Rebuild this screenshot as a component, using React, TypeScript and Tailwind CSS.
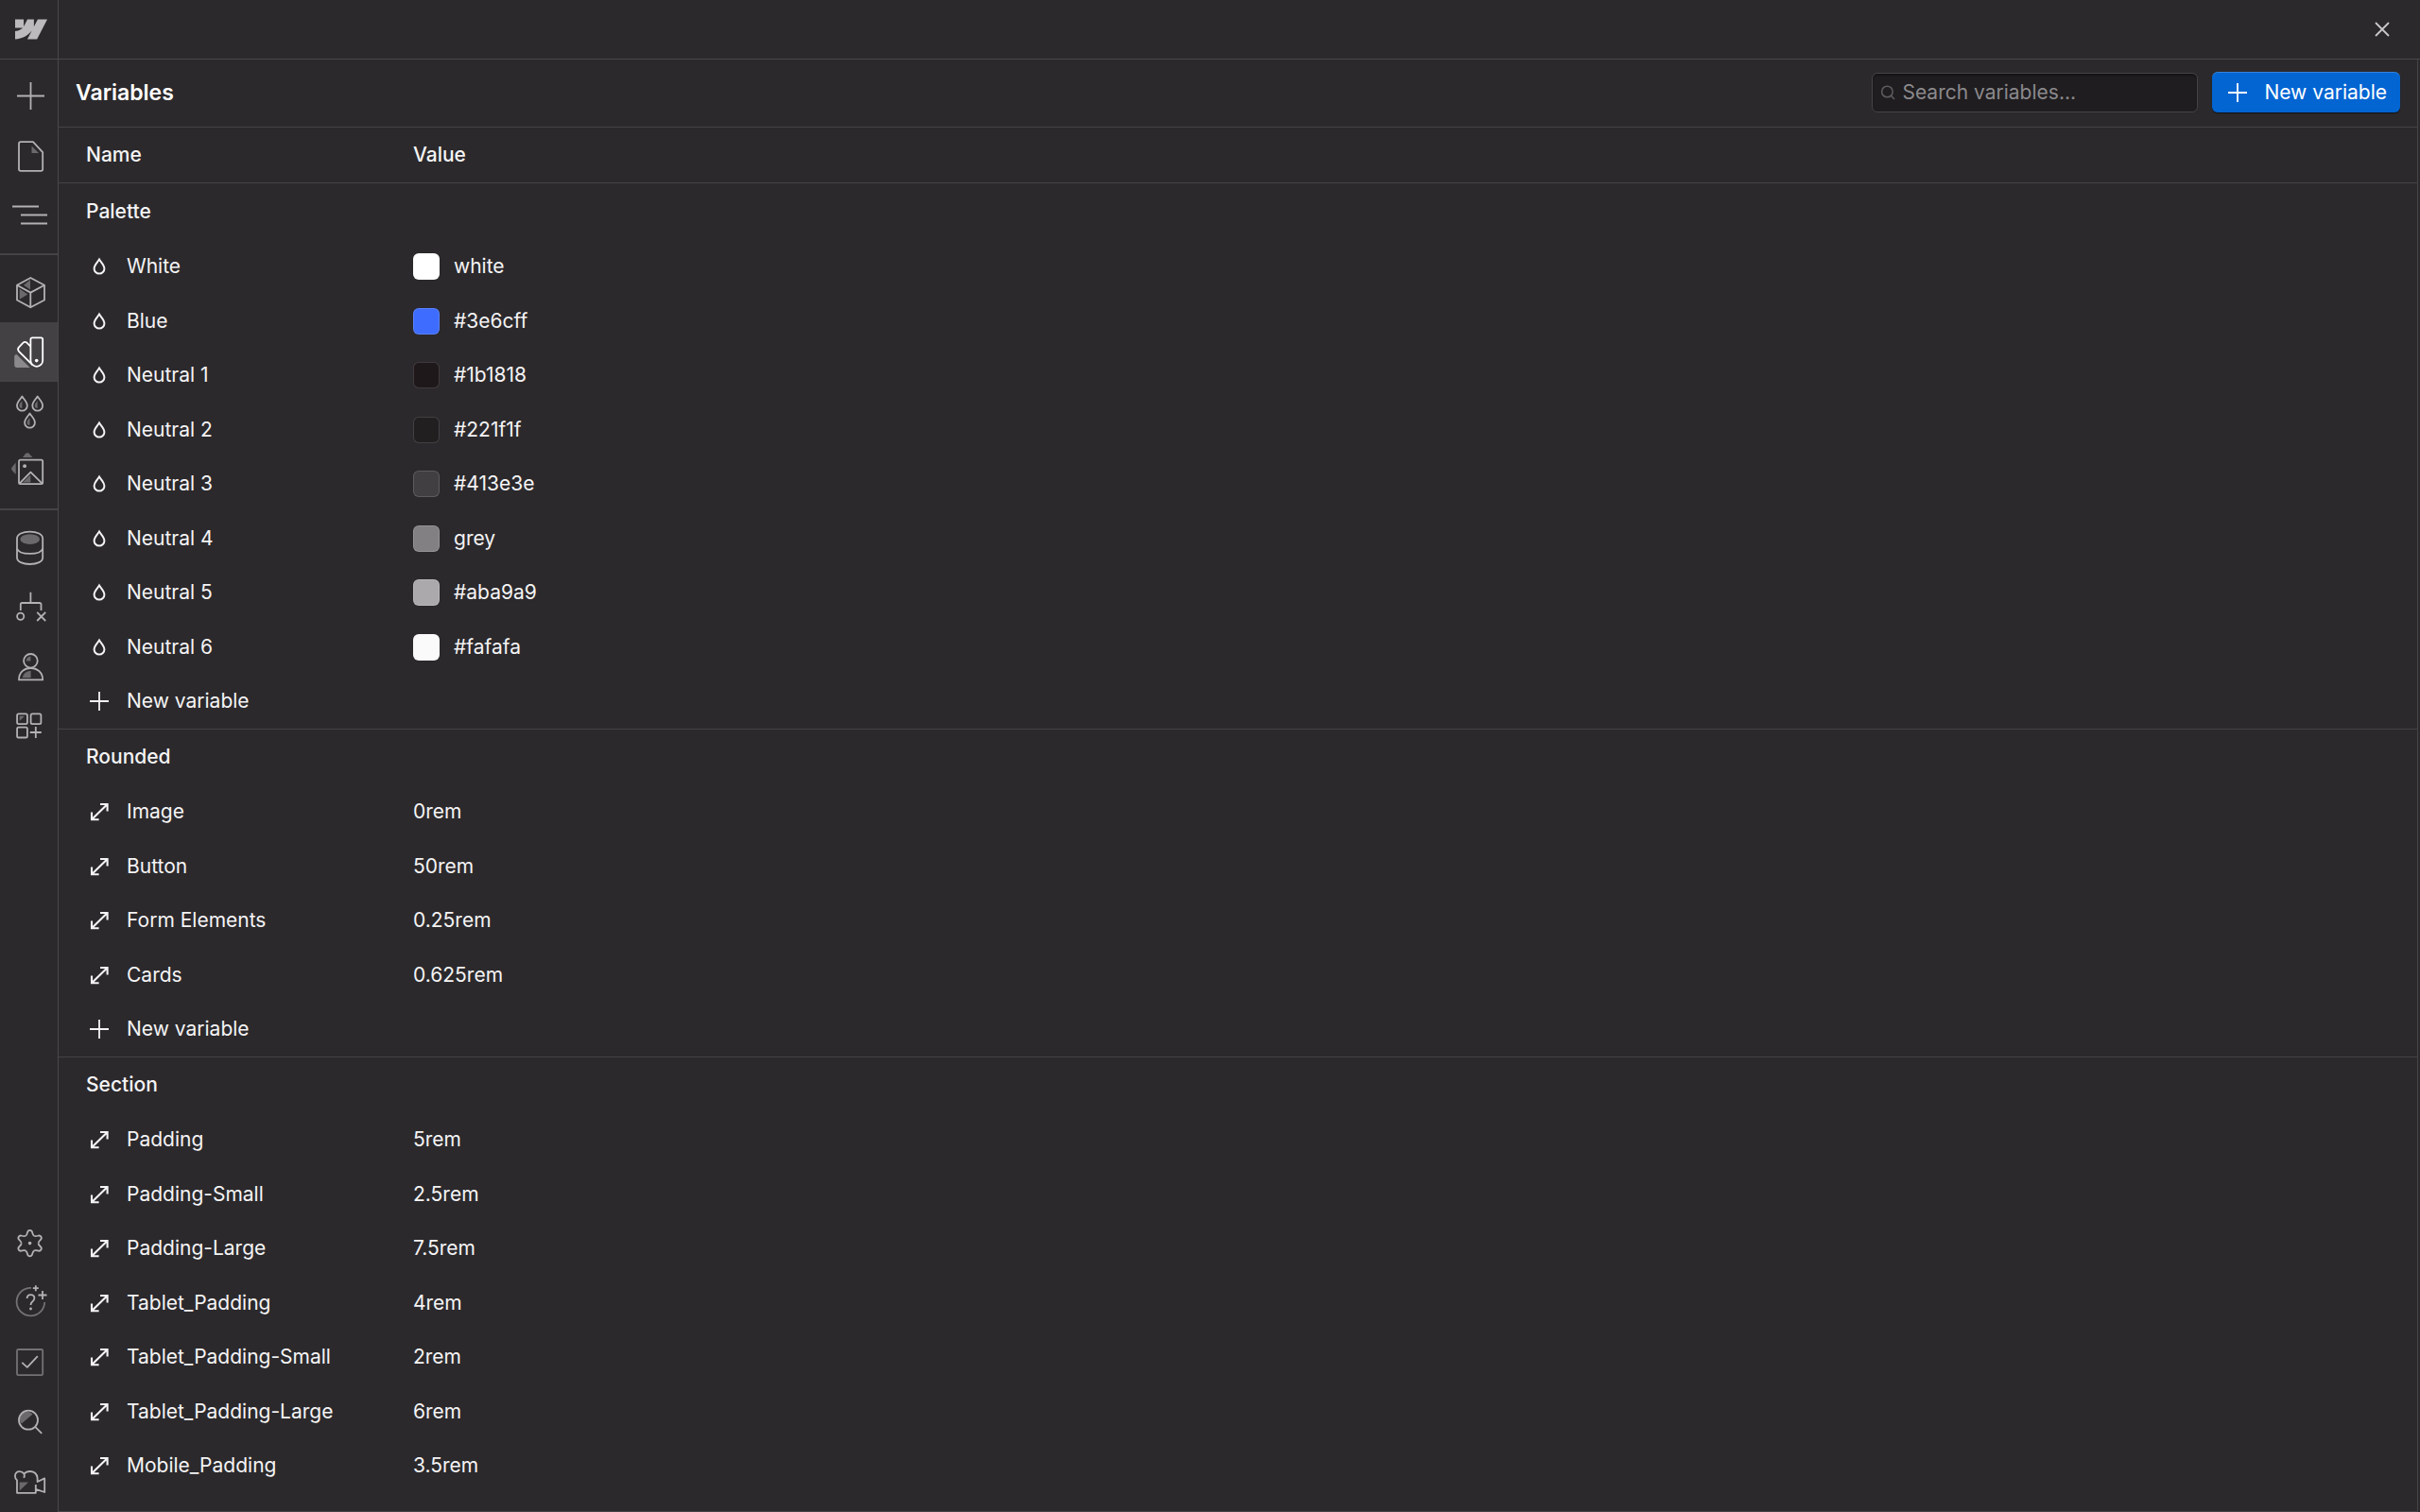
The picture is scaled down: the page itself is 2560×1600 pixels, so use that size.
import React, { useState } from 'react'
import type { ReactNode } from 'react'

type Kind = 'color' | 'size'

type Variable = {
  name: string
  value: string
  swatch?: string
}

type Group = {
  title: string
  kind: Kind
  variables: Variable[]
  showAdd: boolean
}

const groups: Group[] = [
  {
    title: 'Palette',
    kind: 'color',
    showAdd: true,
    variables: [
      { name: 'White', value: 'white', swatch: 'bg-white' },
      { name: 'Blue', value: '#3e6cff', swatch: 'bg-[#3e6cff]' },
      { name: 'Neutral 1', value: '#1b1818', swatch: 'bg-[#1f181a]' },
      { name: 'Neutral 2', value: '#221f1f', swatch: 'bg-[#221f21]' },
      { name: 'Neutral 3', value: '#413e3e', swatch: 'bg-[#423f42]' },
      { name: 'Neutral 4', value: 'grey', swatch: 'bg-[#828082]' },
      { name: 'Neutral 5', value: '#aba9a9', swatch: 'bg-[#aba9ab]' },
      { name: 'Neutral 6', value: '#fafafa', swatch: 'bg-[#fafafa]' }
    ]
  },
  {
    title: 'Rounded',
    kind: 'size',
    showAdd: true,
    variables: [
      { name: 'Image', value: '0rem' },
      { name: 'Button', value: '50rem' },
      { name: 'Form Elements', value: '0.25rem' },
      { name: 'Cards', value: '0.625rem' }
    ]
  },
  {
    title: 'Section',
    kind: 'size',
    showAdd: false,
    variables: [
      { name: 'Padding', value: '5rem' },
      { name: 'Padding-Small', value: '2.5rem' },
      { name: 'Padding-Large', value: '7.5rem' },
      { name: 'Tablet_Padding', value: '4rem' },
      { name: 'Tablet_Padding-Small', value: '2rem' },
      { name: 'Tablet_Padding-Large', value: '6rem' },
      { name: 'Mobile_Padding', value: '3.5rem' }
    ]
  }
]

const dropPath =
  'M0 -7.5C-1.6 -4.8 -5.4 -1.6 -5.4 2.2A5.4 5.4 0 0 0 5.4 2.2C5.4 -1.6 1.6 -4.8 0 -7.5Z'

const gearTooth =
  'M-4.5 -7.8Q-3.2 -8.6 -2.7 -11Q-2.2 -13.7 0 -13.7Q2.2 -13.7 2.7 -11Q3.2 -8.6 4.5 -7.8'

const shade = '#6b696c'

// Sidebar icons all share the 61x63 cell of their button
const addIcon = <path d="M32.5 16V45M18 30.5H47" />

const pagesIcon = (
  <>
    <path d="M33.5 20.5L41 28H33.5Z" fill={shade} stroke="none" />
    <path d="M22 16.2H35L45.2 27.2V45Q45.2 46.9 43.3 46.9H22Q20 46.9 20 45V18Q20 16.2 22 16.2Z" />
  </>
)

const navigatorIcon = <path d="M13 21.5H41M22 30.5H50M22 39.5H50" />

const componentsIcon = (
  <>
    <path d="M25 23.7L32 18V28.5ZM20.7 27.5L29.3 33.5L20.7 38.7Z" fill={shade} stroke="none" />
    <path d="M32.3 16L47 23.8V39.5L32.3 47.3L18 39.5V23.8ZM18 23.8L32.3 31.6L47 23.8M32.3 31.6V47.3" />
  </>
)

const variablesIcon = (
  <>
    <path
      d="M17.6 34L31.7 47.9H18Q15.2 47.9 15.2 45V36Q15.4 34.2 17.6 34Z"
      fill="#8b898c"
      stroke="none"
    />
    <path d="M34.2 16.3H43.4Q45.2 16.3 45.2 18V40.4A6.4 6.4 0 0 1 32.4 40.4V18Q32.4 16.3 34.2 16.3Z" />
    <path d="M32.4 25.6L28.6 21.8Q26.3 20 24.3 21.8L19.8 26.6Q18.2 28.7 20 30.8L34.6 45.4" />
    <circle cx="38.7" cy="40.6" r="1.8" fill="currentColor" stroke="none" />
  </>
)

const stylesIcon = (
  <>
    <g transform="translate(23.4 23)">
      <path d="M0 -3V5A3 3 0 0 1 -3 2Q-2.8 0 0 -3Z" fill={shade} stroke="none" />
      <path d={dropPath} />
    </g>
    <g transform="translate(39.7 23)">
      <path d="M0 -3V5A3 3 0 0 1 -3 2Q-2.8 0 0 -3Z" fill={shade} stroke="none" />
      <path d={dropPath} />
    </g>
    <g transform="translate(31.5 41)">
      <path d="M0 -3V5A3 3 0 0 1 -3 2Q-2.8 0 0 -3Z" fill={shade} stroke="none" />
      <path d={dropPath} />
    </g>
  </>
)

const assetsIcon = (
  <>
    <path
      d="M24 17L27 13Q28 12 30 12.2L34.5 17ZM16.7 22.5V35L12.6 30.4Q11.7 29 12.6 27.6ZM24 43.5L32.3 35.5V43.5Z"
      fill={shade}
      stroke="none"
    />
    <rect x="20" y="19.6" width="25.2" height="25.6" rx="1.6" />
    <path d="M20.5 44.8L32.4 32.6L44.8 44.8" />
    <circle cx="26.1" cy="26.2" r="1.9" fill="currentColor" stroke="none" />
  </>
)

const cmsIcon = (
  <>
    <ellipse cx="31.7" cy="22.6" rx="10.3" ry="5.3" fill={shade} stroke="none" />
    <path d="M18 42V22C18 17.4 24 14.6 31.6 14.6S45.2 17.4 45.2 22V42C45.2 46.4 39.2 49 31.6 49S18 46.4 18 42Z" />
    <path d="M18 32.4C19 36 25 37.9 31.6 37.9S44.2 36 45.2 32.4" />
  </>
)

const logicIcon = (
  <>
    <path d="M32.4 15.7V27M21.8 35V28.6Q21.8 27 23.4 27H41.8Q43.5 27 43.5 28.6V35" />
    <circle cx="21.7" cy="41.3" r="3.6" />
    <path d="M39.2 36.8L48.2 46M48.2 36.8L39.2 46" />
  </>
)

const usersIcon = (
  <>
    <path
      d="M23.6 43.2Q25 36.6 32.6 35.8V43.2ZM32.4 20.6V25.6H27.8Q28 21 32.4 20.6Z"
      fill={shade}
      stroke="none"
    />
    <circle cx="32.4" cy="25.3" r="7.3" />
    <path d="M20 45.4C20 37.4 25.6 33 32.4 33S45.2 37.4 45.2 45.4Z" />
  </>
)

const appsIcon = (
  <>
    <path d="M20.7 20.8H26L20.7 26Z" fill={shade} stroke="none" />
    <rect x="18.1" y="18.3" width="10.8" height="10.8" rx="1.6" />
    <rect x="32.6" y="18.3" width="10.8" height="10.8" rx="1.6" />
    <rect x="18.1" y="32.7" width="10.8" height="10.8" rx="1.6" />
    <path d="M37.8 32V44M31.8 38H43.8" />
  </>
)

const settingsIcon = (
  <g transform="translate(31.6 30.6)">
    {[0, 60, 120, 180, 240, 300].map((angle) => (
      <path key={angle} d={gearTooth} transform={`rotate(${angle})`} />
    ))}
    <circle r="1.8" fill="currentColor" stroke="none" />
  </g>
)

const helpIcon = (
  <>
    <path d="M33 14.8A14.8 14.8 0 1 0 47.2 30" stroke="#737174" />
    <path d="M28.6 26Q28.6 22.2 32.5 22.2Q36.4 22.2 36.4 25.8Q36.4 27.8 34.2 29.4Q32.5 30.6 32.5 33" />
    <circle cx="32.5" cy="37" r="1.4" fill="currentColor" stroke="none" />
    <path d="M37.8 12.2V18.2M34.8 15.2H40.8M45 18V27M40.5 22.5H49.5" />
  </>
)

const auditIcon = (
  <>
    <rect x="18" y="17" width="27.2" height="27.2" rx="1.4" stroke="#737174" />
    <path d="M23.3 30.8L28.8 35.8L39.8 24.2" />
  </>
)

const searchIcon = (
  <>
    <path d="M22.8 32.6A7.6 7.6 0 0 1 34.6 22.4Z" fill={shade} stroke="none" />
    <circle cx="30" cy="28.7" r="10" />
    <path d="M37.2 35.8L44.2 42.8" />
  </>
)

const videoIcon = (
  <>
    <path d="M20.7 31.6H30L20.7 40.6Z" fill={shade} stroke="none" />
    <path d="M18 42.8V29.4Q15.9 27.6 15.9 25Q16.2 20.2 20.8 20.2Q23.8 20.2 25.4 22.6Q27.8 19.9 32.2 20Q38.8 20.4 39.6 27V31L47.2 27.4V42L37.8 38.8V42.8Z" />
    <path d="M25.4 22.6Q26.4 24.4 25.2 26.8M37.8 38.8V34" />
  </>
)

type NavItem = { label: string; icon: ReactNode }

const navGroups: NavItem[][] = [
  [
    { label: 'Add elements', icon: addIcon },
    { label: 'Pages', icon: pagesIcon },
    { label: 'Navigator', icon: navigatorIcon }
  ],
  [
    { label: 'Components', icon: componentsIcon },
    { label: 'Variables', icon: variablesIcon },
    { label: 'Style selectors', icon: stylesIcon },
    { label: 'Assets', icon: assetsIcon }
  ],
  [
    { label: 'CMS', icon: cmsIcon },
    { label: 'Logic', icon: logicIcon },
    { label: 'Users', icon: usersIcon },
    { label: 'Apps', icon: appsIcon }
  ]
]

const footerItems: NavItem[] = [
  { label: 'Settings', icon: settingsIcon },
  { label: 'Help', icon: helpIcon },
  { label: 'Audit', icon: auditIcon },
  { label: 'Quick find', icon: searchIcon },
  { label: 'Video tutorials', icon: videoIcon }
]

function NavButton({ item }: { item: NavItem }) {
  const active = item.label === 'Variables'
  return (
    <button
      type="button"
      aria-label={item.label}
      className={
        active
          ? 'block w-full bg-[#434144] text-white'
          : 'block w-full text-[#b3b1b4] hover:text-white'
      }
    >
      <svg
        viewBox="0 0 61 63"
        className="h-[63px] w-[61px]"
        fill="none"
        stroke="currentColor"
        strokeWidth="1.8"
        strokeLinejoin="round"
      >
        {item.icon}
      </svg>
    </button>
  )
}

function PlusIcon() {
  return (
    <svg viewBox="0 0 20 20" className="size-5 shrink-0" fill="none" stroke="currentColor" strokeWidth="1.8">
      <path d="M10 0V20M0 10H20" />
    </svg>
  )
}

function KindIcon({ kind }: { kind: Kind }) {
  if (kind === 'color') {
    return (
      <svg viewBox="-10 -10 20 20" className="size-5 shrink-0" fill="none" stroke="currentColor" strokeWidth="2">
        <path d={dropPath} />
      </svg>
    )
  }
  return (
    <svg viewBox="0 0 20 20" className="size-5 shrink-0" fill="none" stroke="currentColor" strokeWidth="2.1">
      <path d="M11 2H18.6V9.4M18.6 2L2 18.2M2 10.6V18.2H9.6" />
    </svg>
  )
}

function Sidebar() {
  return (
    <aside className="flex w-[62px] shrink-0 flex-col border-r border-[#4a484b]">
      <div className="flex h-[63px] shrink-0 items-center border-b border-[#4a484b] pl-4">
        <svg viewBox="0 0 24 24" className="size-[34px] text-[#bcbabd]" fill="currentColor" aria-label="Webflow">
          <path d="m24 4.515-7.658 14.97H9.149l3.205-6.204h-.144C9.566 16.713 5.621 18.973 0 19.485v-6.118s3.596-.213 5.71-2.435H0V4.515h6.417v5.278l.144-.001 2.622-5.277h4.854v5.244h.144l2.72-5.244H24Z" />
        </svg>
      </div>
      <nav className="flex flex-1 flex-col">
        {navGroups.map((items, i) => (
          <div key={i} className="border-b-2 border-[#454346] py-2 last:border-b-0">
            {items.map((item) => (
              <NavButton key={item.label} item={item} />
            ))}
          </div>
        ))}
      </nav>
      <div>
        {footerItems.map((item) => (
          <NavButton key={item.label} item={item} />
        ))}
      </div>
    </aside>
  )
}

function GroupRows({ group }: { group: Group }) {
  return (
    <tbody>
      <tr className="h-[59px] [tbody:first-of-type>&]:h-[60px]">
        <th colSpan={2} scope="rowgroup" className="border-t border-[#454346] pl-[29px] text-left font-medium">
          {group.title}
        </th>
      </tr>
      {group.variables.map((variable) => (
        <tr key={variable.name} className="odd:h-[57px] even:h-[58px]">
          <td className="pl-[33px]">
            <div className="flex items-center gap-[19px]">
              <KindIcon kind={group.kind} />
              {variable.name}
            </div>
          </td>
          <td>
            <div className="flex items-center gap-[15px]">
              {variable.swatch && (
                <span className={`size-7 rounded-md border border-white/15 bg-clip-border ${variable.swatch}`} />
              )}
              {variable.value}
            </div>
          </td>
        </tr>
      ))}
      {group.showAdd && (
        <tr className="odd:h-[57px] even:h-[58px]">
          <td colSpan={2} className="pl-[33px]">
            <button type="button" className="flex items-center gap-[19px]">
              <PlusIcon />
              New variable
            </button>
          </td>
        </tr>
      )}
    </tbody>
  )
}

export default function App() {
  const [query, setQuery] = useState('')

  const visibleGroups = groups.map((group) => ({
    ...group,
    variables: group.variables.filter((v) =>
      v.name.toLowerCase().includes(query.toLowerCase())
    )
  }))

  return (
    <div className="flex h-screen overflow-hidden bg-[#2b292c] font-[Inter,sans-serif] text-[21px] leading-7 text-[#f5f4f5]">
      <Sidebar />

      <div className="flex min-w-0 flex-1 flex-col">
        {/* Top bar */}
        <div className="flex h-[63px] shrink-0 items-center justify-end border-b border-[#4a484b] pr-6">
          <button type="button" aria-label="Close" className="p-2 text-[#c9c7ca]">
            <svg viewBox="0 0 16 16" className="size-4" fill="none" stroke="currentColor" strokeWidth="1.8">
              <path d="M1 1L15 15M15 1L1 15" />
            </svg>
          </button>
        </div>

        <main className="mr-0.5 flex min-h-0 flex-1 flex-col border-r border-b border-[#454346]">
          <header className="flex h-[72px] shrink-0 items-center gap-[15px] border-b border-[#454346] px-[18px] pb-0.5">
            <h1 className="flex-1 text-[23px] font-semibold text-white">Variables</h1>
            <label className="flex h-[42px] w-[345px] items-center gap-[7px] rounded-md border border-[#464447] bg-[#1f1d20] pl-2 shadow-[inset_0_2px_2px_rgba(0,0,0,0.35)]">
              <svg viewBox="0 0 16 16" className="size-4 shrink-0 text-[#5f5d60]" fill="none" stroke="currentColor" strokeWidth="1.5">
                <circle cx="7.4" cy="7" r="5.8" />
                <path d="M11.4 11.2L15 15" />
              </svg>
              <input
                type="text"
                aria-label="Search variables"
                placeholder="Search variables..."
                value={query}
                onChange={(e) => setQuery(e.target.value)}
                className="min-w-0 flex-1 bg-transparent outline-none placeholder:text-[#8b898c]"
              />
            </label>
            <button
              type="button"
              className="flex h-[43px] items-center gap-[18px] rounded-md bg-[#0265d2] pr-[14px] pl-[17px] text-white shadow-[0_1px_1px_rgba(0,0,0,0.6),inset_0_1px_0_rgba(255,255,255,0.2)]"
            >
              <PlusIcon />
              New variable
            </button>
          </header>

          <div className="min-h-0 flex-1 overflow-hidden">
            <table className="w-full table-fixed border-separate border-spacing-0">
              <colgroup>
                <col className="w-[375px]" />
                <col />
              </colgroup>
              <thead>
                <tr className="h-[58px] text-left">
                  <th scope="col" className="pl-[29px] font-medium">Name</th>
                  <th scope="col" className="font-medium">Value</th>
                </tr>
              </thead>
              {visibleGroups.map((group) => (
                <GroupRows key={group.title} group={group} />
              ))}
            </table>
          </div>
        </main>
      </div>
    </div>
  )
}
